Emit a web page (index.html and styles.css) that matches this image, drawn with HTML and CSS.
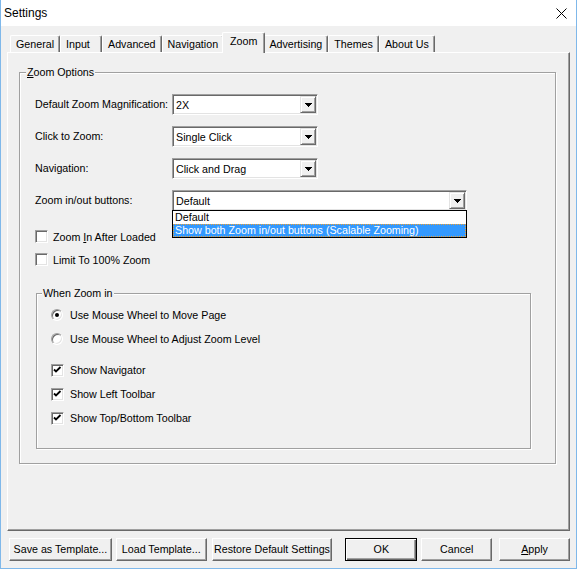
FILE: index.html
```html
<!DOCTYPE html>
<html>
<head>
<meta charset="utf-8">
<title>Settings</title>
<link rel="stylesheet" href="styles.css">
</head>
<body>
<div class="window">
  <div class="titlebar">
    <span class="title">Settings</span>
    <svg class="close" width="11" height="11" viewBox="0 0 11 11"><path d="M0.5 0.5 L10.5 10.5 M10.5 0.5 L0.5 10.5" stroke="#000" stroke-width="1" fill="none"/></svg>
  </div>
  <div class="content">
    <div class="tabs">
      <div class="tab">General</div>
      <div class="tab tab-input">Input</div>
      <div class="tab">Advanced</div>
      <div class="tab">Navigation</div>
      <div class="tab active">Zoom</div>
      <div class="tab">Advertising</div>
      <div class="tab">Themes</div>
      <div class="tab">About Us</div>
    </div>
    <div class="panel">
      <fieldset class="group outer">
        <legend class="legend-outer"><u>Z</u>oom Options</legend>
        <div class="form">
          <div class="label">Default Zoom Magnification:</div>
          <div class="combo combo-short"><span class="combo-text">2X</span><span class="arrow"><svg width="7" height="4" viewBox="0 0 7 4"><polygon points="0,0 7,0 3.5,4" fill="#000"/></svg></span></div>
          <div class="label">Click to Zoom:</div>
          <div class="combo combo-short"><span class="combo-text">Single Click</span><span class="arrow"><svg width="7" height="4" viewBox="0 0 7 4"><polygon points="0,0 7,0 3.5,4" fill="#000"/></svg></span></div>
          <div class="label">Navigation:</div>
          <div class="combo combo-short"><span class="combo-text">Click and Drag</span><span class="arrow"><svg width="7" height="4" viewBox="0 0 7 4"><polygon points="0,0 7,0 3.5,4" fill="#000"/></svg></span></div>
          <div class="label">Zoom in/out buttons:</div>
          <div class="combo combo-long"><span class="combo-text">Default</span><span class="arrow"><svg width="7" height="4" viewBox="0 0 7 4"><polygon points="0,0 7,0 3.5,4" fill="#000"/></svg></span>
            <div class="dropdown">
              <div class="option">Default</div>
              <div class="option selected">Show both Zoom in/out buttons (Scalable Zooming)</div>
            </div>
          </div>
        </div>
        <div class="checks">
          <div class="row"><span class="checkbox"></span><span>Zoom <u>I</u>n After Loaded</span></div>
          <div class="row"><span class="checkbox"></span><span>Limit To 100% Zoom</span></div>
        </div>
        <fieldset class="group inner">
          <legend class="legend-inner">When Zoom in</legend>
          <div class="row row-inner"><span class="radio checked"></span><span>Use Mouse Wheel to Move Page</span></div>
          <div class="row row-inner"><span class="radio"></span><span>Use Mouse Wheel to Adjust Zoom Level</span></div>
          <div class="inner-checks">
            <div class="row row-inner"><span class="checkbox checked"><svg width="9" height="9" viewBox="0 0 9 9"><path d="M1 3.5 L3 5.5 L7.5 1" stroke="#000" stroke-width="1.8" fill="none"/></svg></span><span>Show Navigator</span></div>
            <div class="row row-inner"><span class="checkbox checked"><svg width="9" height="9" viewBox="0 0 9 9"><path d="M1 3.5 L3 5.5 L7.5 1" stroke="#000" stroke-width="1.8" fill="none"/></svg></span><span>Show Left Toolbar</span></div>
            <div class="row row-inner"><span class="checkbox checked"><svg width="9" height="9" viewBox="0 0 9 9"><path d="M1 3.5 L3 5.5 L7.5 1" stroke="#000" stroke-width="1.8" fill="none"/></svg></span><span>Show Top/Bottom Toolbar</span></div>
          </div>
        </fieldset>
      </fieldset>
    </div>
    <div class="buttons">
      <div class="btn btn-save">Save as Template...</div>
      <div class="btn btn-load">Load Template...</div>
      <div class="btn btn-restore">Restore Default Settings</div>
      <div class="btn btn-ok default">OK</div>
      <div class="btn btn-cancel">Cancel</div>
      <div class="btn btn-apply"><u>A</u>pply</div>
    </div>
  </div>
</div>
</body>
</html>
```

FILE: styles.css
```css
* { box-sizing: border-box; }
html, body { margin: 0; padding: 0; background: #f0f0f0; }
body {
  font-family: "Liberation Sans", Arial, sans-serif;
  font-size: 10.7px;
  color: #000;
}
u { text-decoration: underline; text-underline-offset: 1px; }

.window {
  width: 577px;
  height: 569px;
  background: #f0f0f0;
  border-left: 1px solid #7fb8ea;
  border-right: 1px solid #7fb8ea;
  border-bottom: 1px solid #7fb8ea;
  overflow: hidden;
}

.titlebar {
  height: 26px;
  background: #fff;
  display: flex;
  align-items: center;
  justify-content: space-between;
  padding: 0 9px 1px 3px;
}
.title { font-size: 12px; }
.close { display: block; margin-top: 1px; }

.content { padding: 6px 6px 0 6px; }

.tabs {
  display: flex;
  align-items: flex-end;
  height: 20px;
  padding-left: 3px;
  position: relative;
  z-index: 2;
}
.tab {
  height: 17px;
  line-height: 16px;
  padding: 0 5px;
  border-top: 1px solid #fff;
  border-left: 1px solid #fff;
  border-right: 1px solid #696969;
  box-shadow: inset -1px 0 #a0a0a0;
  border-radius: 2px 2px 0 0;
  background: #f0f0f0;
  white-space: nowrap;
}
.tab-input { min-width: 42px; }
.tab.active {
  height: 21px;
  margin: 0 -2px -1px -2px;
  padding: 0 7px 2px 7px;
  line-height: 17px;
  position: relative;
  z-index: 3;
}

.panel {
  height: 479px;
  border: 1px solid;
  border-color: #fff #696969 #696969 #fff;
  box-shadow: inset -1px -1px #a0a0a0;
  padding: 0 13px 0 11px;
  position: relative;
  z-index: 1;
}

.group {
  border: 1px solid #a0a0a0;
  box-shadow: inset 1px 1px #fff, 1px 1px #fff;
  margin: 0;
}
.group legend {
  padding: 0 1px;
  line-height: 13px;
  background: #f0f0f0;
}
.outer {
  margin-top: 13px;
  padding: 15px 24px 14px 15px;
}
.legend-outer { margin-left: -9px; }
.legend-inner { margin-left: -9px; }

.form {
  display: grid;
  grid-template-columns: 137px auto;
  row-gap: 11px;
  align-items: center;
}
.label { line-height: 13px; }

.combo {
  position: relative;
  height: 21px;
  background: #fff;
  border: 1px solid;
  border-color: #a0a0a0 #fff #fff #a0a0a0;
  box-shadow: inset 1px 1px #696969, inset -1px -1px #e3e3e3;
  display: flex;
  align-items: center;
}
.combo-short { width: 146px; }
.combo-long { width: 295px; }
.combo-text { padding-left: 3px; }
.arrow {
  margin-left: auto;
  margin-right: 1px;
  width: 16px;
  height: 17px;
  background: #f0f0f0;
  border: 1px solid;
  border-color: #e3e3e3 #696969 #696969 #e3e3e3;
  box-shadow: inset 1px 1px #fff, inset -1px -1px #a0a0a0;
  display: flex;
  align-items: center;
  justify-content: center;
}
.arrow svg { display: block; shape-rendering: crispEdges; }

.dropdown {
  position: absolute;
  top: 19px;
  left: -1px;
  width: 295px;
  background: #fff;
  border: 1px solid #000;
  z-index: 5;
}
.option {
  height: 13px;
  line-height: 12px;
  padding-left: 2px;
  white-space: nowrap;
}
.option.selected {
  background: #3399ff;
  color: #fff;
  border: 1px dotted #f0a030;
  line-height: 10px;
  padding-left: 1px;
}

.checks { margin-top: 14px; }
.row {
  display: flex;
  align-items: center;
  height: 23px;
  gap: 5px;
}
.row-inner { height: 24px; gap: 6px; }

.checkbox {
  width: 13px;
  height: 13px;
  background: #fff;
  border: 1px solid;
  border-color: #a0a0a0 #fff #fff #a0a0a0;
  box-shadow: inset 1px 1px #696969, inset -1px -1px #e3e3e3;
  display: flex;
  align-items: center;
  justify-content: center;
  flex: none;
}
.checkbox svg { display: block; }

.radio {
  width: 12px;
  height: 12px;
  border-radius: 50%;
  background: #fff;
  border: 1px solid;
  border-color: #a0a0a0 #fff #fff #a0a0a0;
  box-shadow: inset 1px 1px #696969, inset -1px -1px #e3e3e3;
  margin-right: 1px;
  flex: none;
  display: flex;
  align-items: center;
  justify-content: center;
}
.radio.checked::after {
  content: "";
  width: 4px;
  height: 4px;
  border-radius: 50%;
  background: #000;
}

.inner {
  margin: 16px 0 0 1px;
  padding: 3px 10px 18px 14px;
}
.inner-checks { margin-top: 7px; }

.buttons {
  display: flex;
  margin-top: 7px;
  padding-left: 2px;
}
.btn {
  height: 23px;
  line-height: 21px;
  text-align: center;
  background: #f0f0f0;
  border: 1px solid;
  border-color: #fff #696969 #696969 #fff;
  box-shadow: inset -1px -1px #a0a0a0;
  white-space: nowrap;
}
.btn.default {
  border-color: #000;
  box-shadow: inset 1px 1px #fff, inset -1px -1px #696969, inset -2px -2px #a0a0a0;
}
.btn-save { width: 103px; }
.btn-load { width: 91px; margin-left: 4px; }
.btn-restore { width: 121px; margin-left: 5px; }
.btn-ok { width: 72px; margin-left: 13px; }
.btn-cancel { width: 71px; margin-left: 4px; }
.btn-apply { width: 71px; margin-left: 7px; }
```
